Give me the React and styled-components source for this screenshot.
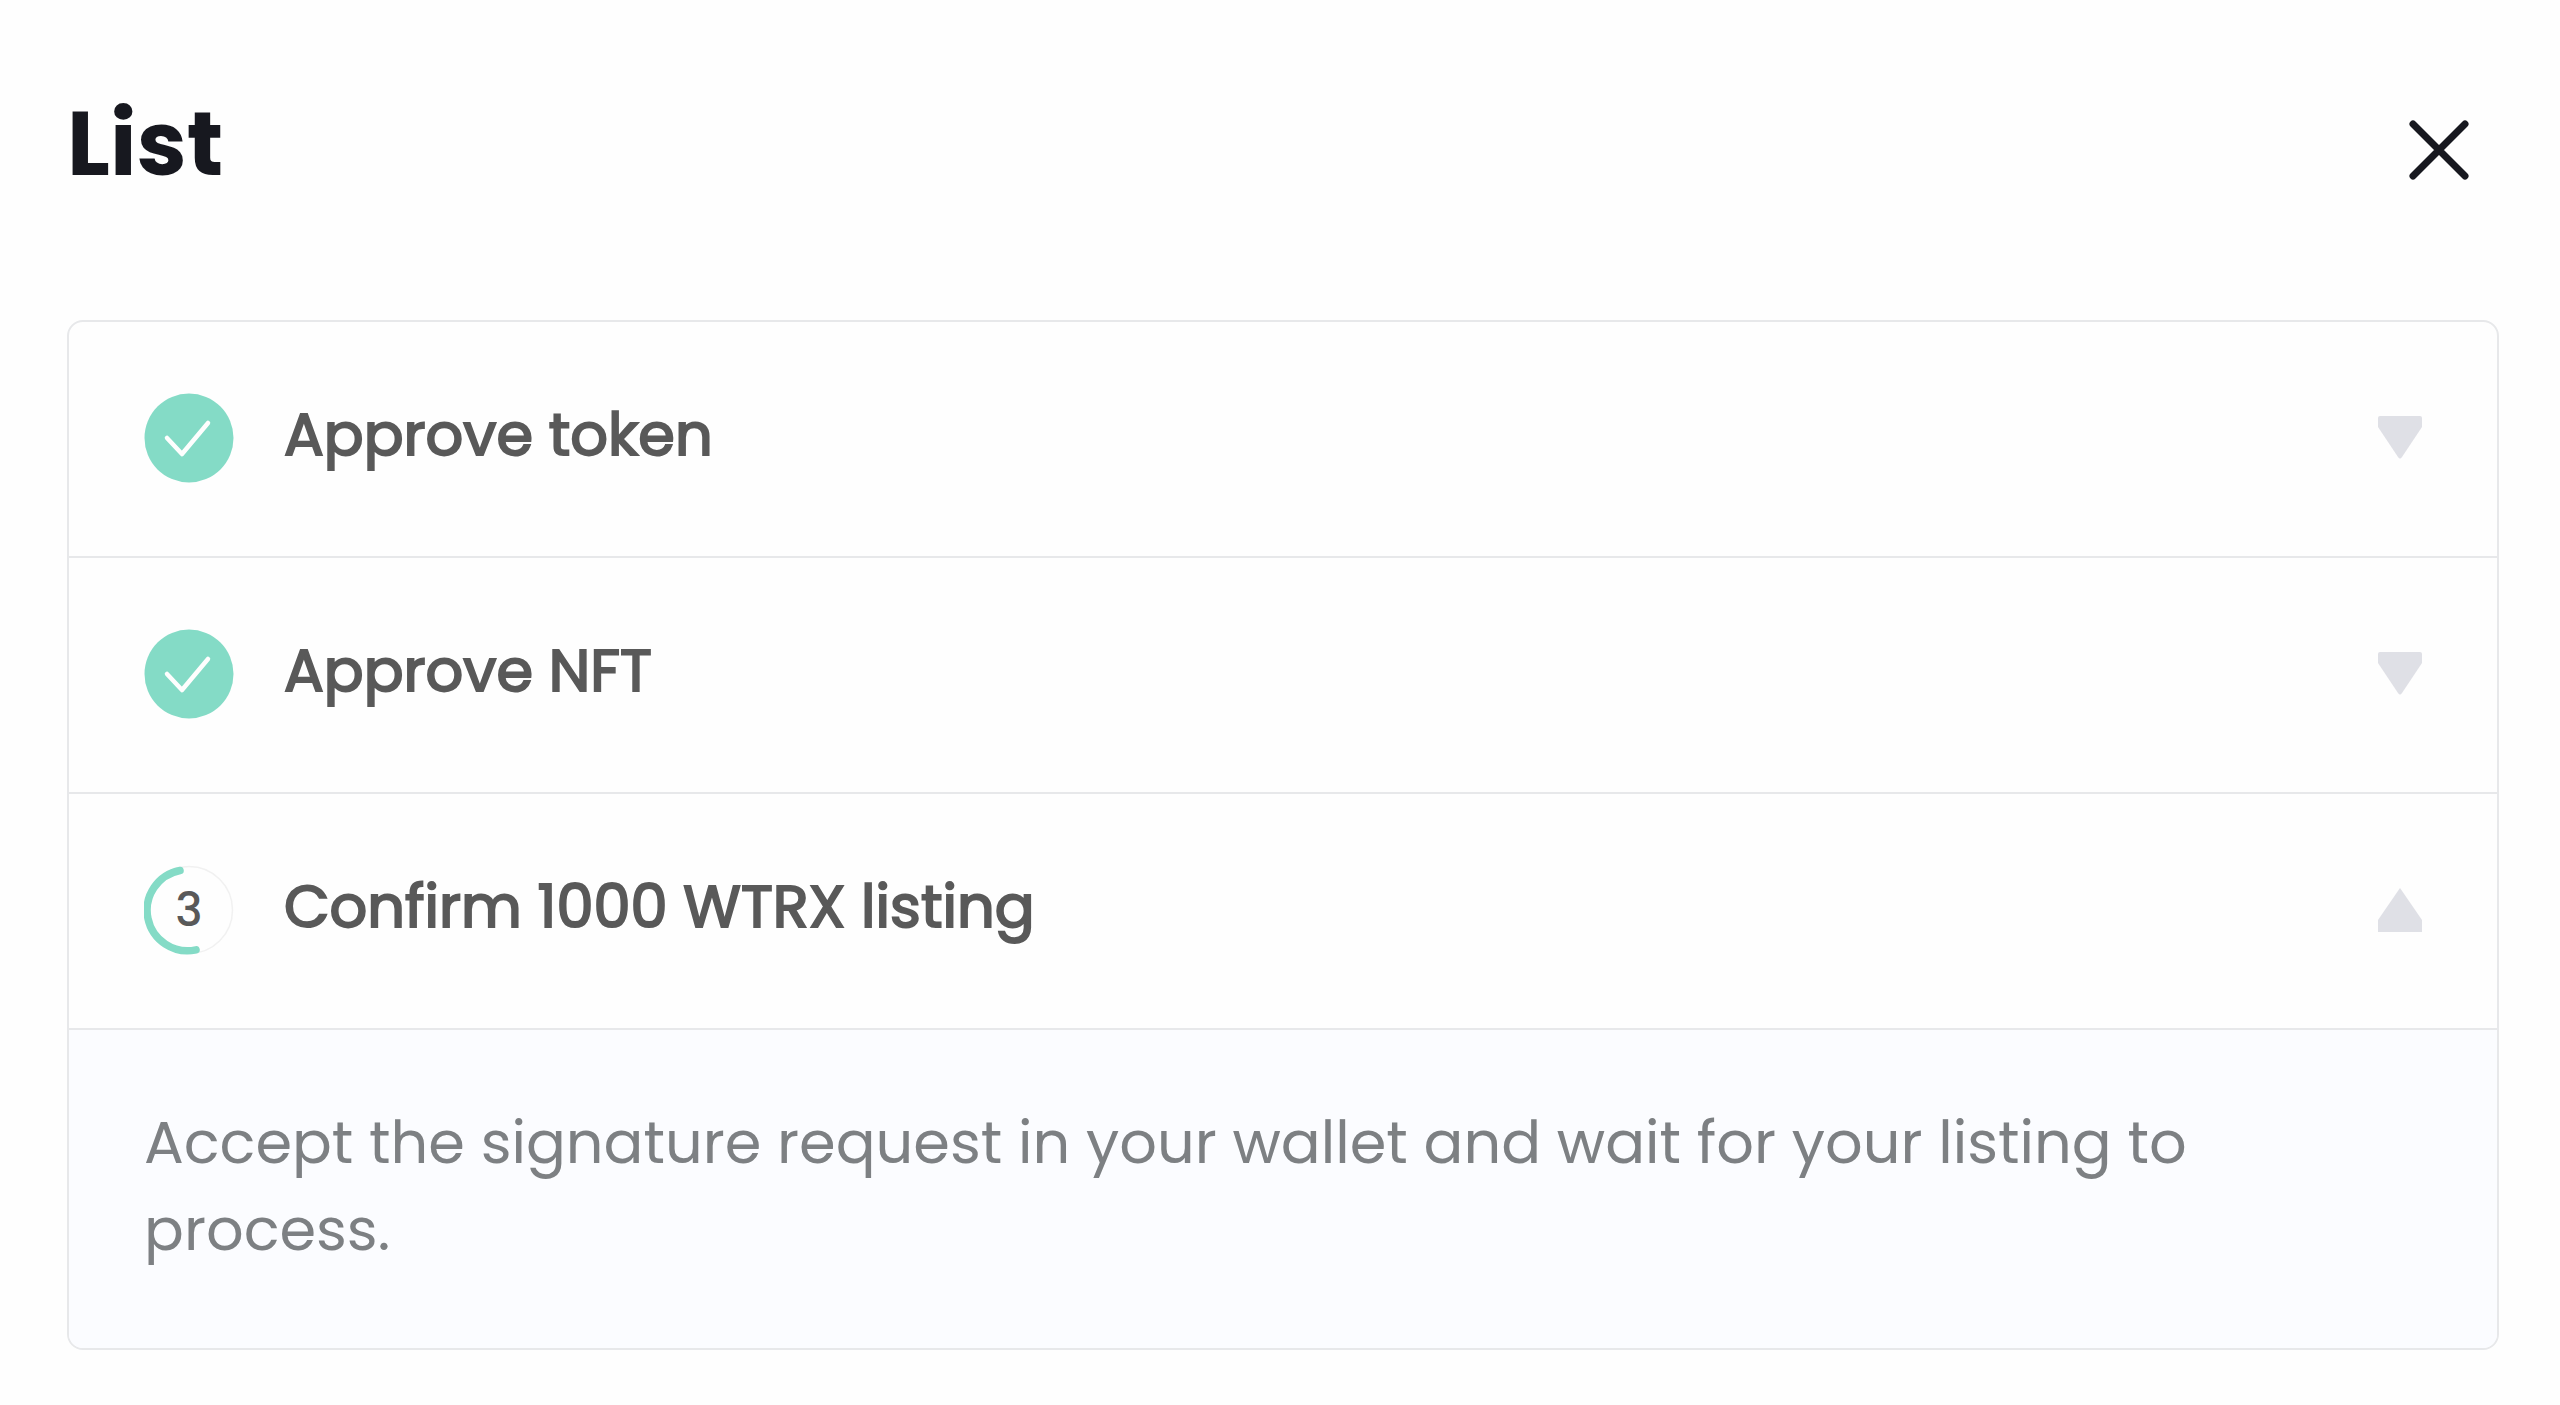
import React, { useState } from "react";
import styled, { createGlobalStyle } from "styled-components";

const GlobalStyle = createGlobalStyle`
  * {
    box-sizing: border-box;
  }
  body {
    margin: 0;
    background: #fefefe;
    font-family: Poppins, Inter, "Liberation Sans", sans-serif;
  }
`;

const steps = [
  { id: 1, title: "Approve token", done: true },
  { id: 2, title: "Approve NFT", done: true },
  {
    id: 3,
    title: "Confirm 1000 WTRX listing",
    done: false,
    text: "Accept the signature request in your wallet and wait for your listing to process.",
  },
];

const DoneIcon = () => (
  <StatusSvg viewBox="0 0 90 90" aria-hidden="true">
    <circle cx="45" cy="45" r="44.5" fill="#84dbc6" />
    <path
      d="M23 45 L38 61 L64 30"
      fill="none"
      stroke="#fefefe"
      strokeWidth="4.5"
      strokeLinecap="round"
      strokeLinejoin="round"
    />
  </StatusSvg>
);

const Spinner = ({ number }) => (
  <SpinnerWrapper>
    <StatusSvg viewBox="0 0 90 90" aria-hidden="true">
      <circle cx="45" cy="45" r="43.5" fill="none" stroke="#f1f1f1" strokeWidth="1.5" />
      <path
        d="M36 5.5 A40.5 40.5 0 1 0 52 84.9"
        fill="none"
        stroke="#84dbc6"
        strokeWidth="7.5"
        strokeLinecap="round"
      />
    </StatusSvg>
    <StepNumber>{number}</StepNumber>
  </SpinnerWrapper>
);

const Arrow = ({ open }) => (
  <ArrowSvg viewBox="0 0 44 44" aria-hidden="true">
    {open ? (
      <path d="M22 0 L44 32 V44 H0 V32 Z" />
    ) : (
      <path d="M2 0 H42 Q44 0 44 2 V11 L24 41 Q22 44 20 41 L0 11 V2 Q0 0 2 0 Z" />
    )}
  </ArrowSvg>
);

export default function App() {
  const [openId, setOpenId] = useState(3);

  return (
    <Modal role="dialog" aria-labelledby="modal-title">
      <GlobalStyle />
      <Header>
        <Title id="modal-title">List</Title>
        <CloseButton type="button" aria-label="Close">
          <svg viewBox="0 0 60 60" aria-hidden="true">
            <path d="M4 4 L56 56 M56 4 L4 56" />
          </svg>
        </CloseButton>
      </Header>
      <StepList>
        {steps.map((step) => {
          const open = openId === step.id;
          return (
            <Step key={step.id}>
              <StepButton
                type="button"
                aria-expanded={open}
                onClick={() => setOpenId(open ? null : step.id)}
              >
                {step.done ? <DoneIcon /> : <Spinner number={step.id} />}
                <StepTitle>{step.title}</StepTitle>
                <Arrow open={open} />
              </StepButton>
              {open && step.text && <StepText>{step.text}</StepText>}
            </Step>
          );
        })}
      </StepList>
    </Modal>
  );
}

const Modal = styled.main`
  padding: 88px 61px 56px 67px;
`;

const Header = styled.header`
  display: flex;
  align-items: center;
  justify-content: space-between;
  height: 124px;
  margin-bottom: 108px;
  padding-right: 30px;
`;

const Title = styled.h1`
  align-self: flex-start;
  margin: 0;
  color: #17181f;
  font-size: 90px;
  font-weight: 700;
  line-height: 112px;
`;

const CloseButton = styled.button`
  display: flex;
  padding: 0;
  border: 0;
  background: none;
  cursor: pointer;
  svg {
    width: 60px;
    height: 60px;
    fill: none;
    stroke: #17181f;
    stroke-width: 7;
    stroke-linecap: round;
  }
`;

const StepList = styled.ul`
  margin: 0;
  padding: 0;
  border: 2px solid #e7e8ea;
  border-radius: 16px;
  list-style: none;
  overflow: hidden;
`;

const Step = styled.li`
  & + & {
    border-top: 2px solid #e7e8ea;
  }
`;

const StepButton = styled.button`
  display: flex;
  align-items: center;
  width: 100%;
  height: 234px;
  padding: 0 75px 2px;
  border: 0;
  background: none;
  color: #595959;
  font-family: inherit;
  text-align: left;
  cursor: pointer;
`;

const StatusSvg = styled.svg`
  flex: none;
  width: 90px;
  height: 90px;
`;

const SpinnerWrapper = styled.span`
  display: grid;
  place-items: center;
  > * {
    grid-area: 1 / 1;
  }
`;

const StepNumber = styled.span`
  font-size: 46px;
  font-weight: 500;
  line-height: 88px;
`;

const StepTitle = styled.span`
  flex: 1;
  margin-left: 50px;
  padding-bottom: 6px;
  font-size: 59px;
  font-weight: 400;
  line-height: 88px;
  -webkit-text-stroke: 2px #595959;
`;

const ArrowSvg = styled.svg`
  flex: none;
  width: 44px;
  height: 44px;
  fill: #dfe0e6;
`;

const StepText = styled.p`
  margin: 0;
  padding: 69px 75px 75px;
  border-top: 2px solid #e7e8ea;
  background: #fbfcff;
  color: #7d8083;
  font-size: 59px;
  line-height: 87px;
`;
